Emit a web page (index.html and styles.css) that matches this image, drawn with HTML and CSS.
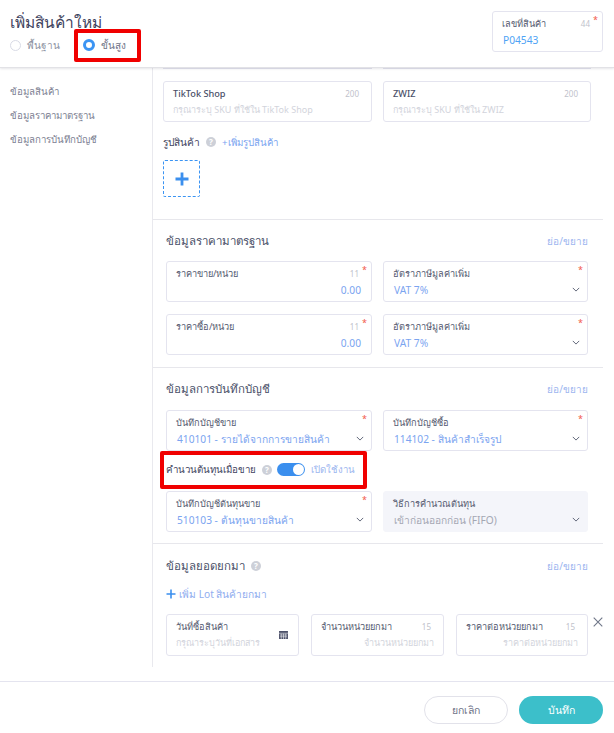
FILE: index.html
```html
<!DOCTYPE html>
<html lang="th">
<head>
<meta charset="utf-8">
<title>เพิ่มสินค้าใหม่</title>
<link rel="stylesheet" href="styles.css">
</head>
<body>
<div class="page">
  <header class="top">
    <div class="top-left">
      <h1 class="title">เพิ่มสินค้าใหม่</h1>
      <div class="radios">
        <label class="radio"><span class="dot"></span>พื้นฐาน</label>
        <label class="radio radio-on"><span class="dot dot-on"></span>ขั้นสูง</label>
      </div>
    </div>
    <div class="field code-field">
      <div class="field-head"><span class="lbl">เลขที่สินค้า</span><span class="count">44</span></div>
      <div class="val">P04543</div>
      <i class="req">*</i>
    </div>
    <div class="redbox redbox-radio"></div>
  </header>
  <div class="body">
    <nav class="side">
      <a>ข้อมูลสินค้า</a>
      <a>ข้อมูลราคามาตรฐาน</a>
      <a>ข้อมูลการบันทึกบัญชี</a>
    </nav>
    <main class="main">
      <section class="sec sec-first">
        <div class="cut-row"><div class="cut"></div><div class="cut"></div></div>
        <div class="two two-wide">
          <div class="field">
            <div class="field-head"><b class="lbl-b">TikTok Shop</b><span class="count">200</span></div>
            <div class="ph">กรุณาระบุ SKU ที่ใช้ใน TikTok Shop</div>
          </div>
          <div class="field">
            <div class="field-head"><b class="lbl-b">ZWIZ</b><span class="count">200</span></div>
            <div class="ph">กรุณาระบุ SKU ที่ใช้ใน ZWIZ</div>
          </div>
        </div>
        <div class="pic-row">
          <span class="pic-lbl">รูปสินค้า</span>
          <span class="help">?</span>
          <a class="link">+เพิ่มรูปสินค้า</a>
        </div>
        <div class="upload">
          <svg width="16" height="16" viewBox="0 0 16 16"><path d="M8 1.500v13M1.500 8h13" stroke="#3b8fee" stroke-width="2.8" fill="none"/></svg>
        </div>
      </section>

      <section class="sec sec-price">
        <div class="sec-head"><h2>ข้อมูลราคามาตรฐาน</h2><a class="link-sm">ย่อ/ขยาย</a></div>
        <div class="two">
          <div class="field">
            <div class="field-head"><span class="lbl">ราคาขาย/หน่วย</span><span class="count">11</span></div>
            <div class="val val-right">0.00</div><i class="req">*</i>
          </div>
          <div class="field">
            <div class="field-head"><span class="lbl">อัตราภาษีมูลค่าเพิ่ม</span></div>
            <div class="val">VAT 7%</div><i class="req">*</i>
            <svg class="chev" viewBox="0 0 10 6"><path d="M1 1l4 4 4-4" stroke="#5b6275" stroke-width="1.2" fill="none"/></svg>
          </div>
          <div class="field">
            <div class="field-head"><span class="lbl">ราคาซื้อ/หน่วย</span><span class="count">11</span></div>
            <div class="val val-right">0.00</div><i class="req">*</i>
          </div>
          <div class="field">
            <div class="field-head"><span class="lbl">อัตราภาษีมูลค่าเพิ่ม</span></div>
            <div class="val">VAT 7%</div><i class="req">*</i>
            <svg class="chev" viewBox="0 0 10 6"><path d="M1 1l4 4 4-4" stroke="#5b6275" stroke-width="1.2" fill="none"/></svg>
          </div>
        </div>
      </section>

      <section class="sec sec-acc">
        <div class="sec-head"><h2>ข้อมูลการบันทึกบัญชี</h2><a class="link-sm">ย่อ/ขยาย</a></div>
        <div class="two">
          <div class="field">
            <div class="field-head"><span class="lbl">บันทึกบัญชีขาย</span></div>
            <div class="val">410101 - รายได้จากการขายสินค้า</div><i class="req">*</i>
            <svg class="chev" viewBox="0 0 10 6"><path d="M1 1l4 4 4-4" stroke="#5b6275" stroke-width="1.2" fill="none"/></svg>
          </div>
          <div class="field">
            <div class="field-head"><span class="lbl">บันทึกบัญชีซื้อ</span></div>
            <div class="val">114102 - สินค้าสำเร็จรูป</div><i class="req">*</i>
            <svg class="chev" viewBox="0 0 10 6"><path d="M1 1l4 4 4-4" stroke="#5b6275" stroke-width="1.2" fill="none"/></svg>
          </div>
        </div>
        <div class="toggle-row">
          <span class="toggle-lbl">คำนวนต้นทุนเมื่อขาย</span>
          <span class="help">?</span>
          <span class="switch"><span class="knob"></span></span>
          <span class="toggle-txt">เปิดใช้งาน</span>
          <div class="redbox redbox-toggle"></div>
        </div>
        <div class="two">
          <div class="field">
            <div class="field-head"><span class="lbl">บันทึกบัญชีต้นทุนขาย</span></div>
            <div class="val">510103 - ต้นทุนขายสินค้า</div><i class="req">*</i>
            <svg class="chev" viewBox="0 0 10 6"><path d="M1 1l4 4 4-4" stroke="#5b6275" stroke-width="1.2" fill="none"/></svg>
          </div>
          <div class="field field-off">
            <div class="field-head"><span class="lbl">วิธีการคำนวณต้นทุน</span></div>
            <div class="val val-off">เข้าก่อนออกก่อน (FIFO)</div>
            <svg class="chev" viewBox="0 0 10 6"><path d="M1 1l4 4 4-4" stroke="#5b6275" stroke-width="1.2" fill="none"/></svg>
          </div>
        </div>
      </section>

      <section class="sec sec-open">
        <div class="sec-head"><h2>ข้อมูลยอดยกมา <span class="help help-h">?</span></h2><a class="link-sm">ย่อ/ขยาย</a></div>
        <a class="add-lot">
          <svg width="10" height="10" viewBox="0 0 10 10"><path d="M5 .5v9M.5 5h9" stroke="#3b8fee" stroke-width="1.6" fill="none"/></svg>
          เพิ่ม Lot สินค้ายกมา
        </a>
        <div class="lot">
          <div class="field">
            <div class="field-head"><span class="lbl">วันที่ซื้อสินค้า</span></div>
            <div class="ph">กรุณาระบุวันที่เอกสาร</div>
            <svg class="cal" width="9" height="8" viewBox="0 0 10 9"><rect width="10" height="9" fill="#4a4f68"/><path d="M0 2.500h10M1 4.500h8M1 6.500h8M2.500 3v6M5 3v6M7.500 3v6" stroke="#fff" stroke-width=".6"/></svg>
          </div>
          <div class="field">
            <div class="field-head"><span class="lbl">จำนวนหน่วยยกมา</span><span class="count">15</span></div>
            <div class="ph ph-right">จำนวนหน่วยยกมา</div>
          </div>
          <div class="field">
            <div class="field-head"><span class="lbl">ราคาต่อหน่วยยกมา</span><span class="count">15</span></div>
            <div class="ph ph-right">ราคาต่อหน่วยยกมา</div>
          </div>
          <svg class="close" width="10" height="10" viewBox="0 0 10 10"><path d="M.7.700l8.600 8.600M9.300.7L.7 9.300" stroke="#6f7688" stroke-width="1.1" fill="none"/></svg>
        </div>
      </section>
    </main>
  </div>
  <footer class="foot">
    <button class="btn btn-cancel">ยกเลิก</button>
    <button class="btn btn-save">บันทึก</button>
  </footer>
</div>
</body>
</html>
```
FILE: styles.css
```css
* { box-sizing: border-box; }
html, body { margin: 0; padding: 0; }
body {
  width: 614px;
  height: 733px;
  overflow: hidden;
  background: #fff;
  color: #4a4f68;
  font-family: "Noto Sans", "Open Sans", sans-serif;
  font-size: 11px;
}
.page { position: relative; width: 614px; height: 733px; display: flex; flex-direction: column; }

/* header */
.top {
  position: relative;
  z-index: 2;
  height: 68px;
  flex: none;
  display: flex;
  justify-content: space-between;
  padding: 11px 11px 0 10px;
  background: #fff;
  border-bottom: 1px solid #e2e2e6;
  box-shadow: 0 1px 2px rgba(60, 60, 80, .12);
}
.title { margin: 0; font-size: 15.5px; line-height: 22px; font-weight: 400; color: #3f4460; }
.radios { display: flex; margin-top: 1px; }
.radio { display: flex; align-items: center; gap: 6px; height: 22px; font-size: 10px; color: #8d91a1; width: 73px; }
.radio-on { color: #6f7488; }
.dot { width: 11px; height: 11px; border-radius: 50%; border: 1px solid #d9dbe6; }
.dot-on { width: 12px; height: 12px; border: 3px solid #3b94f3; }
.redbox { position: absolute; border: 4px solid #f00000; border-radius: 2px; }
.redbox-radio { left: 74px; top: 29px; width: 67px; height: 33px; }
.redbox-toggle { left: -6px; top: 0; width: 207px; height: 38px; }

/* fields */
.field {
  position: relative;
  height: 41px;
  padding: 3px 9px 0 9px;
  border: 1px solid #e4e4ef;
  border-radius: 3px;
  background: #fff;
}
.field-head { display: flex; justify-content: space-between; align-items: center; height: 17px; }
.lbl { font-size: 9.2px; color: #545970; }
.lbl-b { font-size: 9.2px; font-weight: 500; color: #4a4f68; }
.count { font-size: 8px; color: #c0c2cb; padding-right: 3px; }
.val { font-size: 10.2px; line-height: 16px; padding-left: 1px; color: #7ba4f0; }
.val-right { text-align: right; padding-right: 1px; }
.val-off { color: #a4a7b3; }
.ph { font-size: 9px; line-height: 16px; color: #d2d4dc; white-space: nowrap; overflow: hidden; }
.ph-right { text-align: right; }
.req { position: absolute; right: 4px; top: 3px; font-style: normal; font-size: 9px; line-height: 9px; color: #f2584c; }
.chev { position: absolute; right: 7px; top: 25px; width: 8px; height: 5px; }
.cal { position: absolute; right: 10px; top: 16px; }
.field-off { border-color: #f4f5fa; background: #f4f5fa; }
.code-field { width: 111px; }
.code-field .val { color: #4ea3f5; }

/* body */
.body { flex: none; height: 613px; display: flex; overflow: hidden; }
.side {
  flex: none;
  width: 152px;
  padding: 12px 0 0 10px;
  display: flex;
  flex-direction: column;
  font-size: 9.7px;
  color: #7d8193;
}
.side a { height: 24px; line-height: 24px; }
.main { flex: none; width: 451px; height: 599px; border-left: 1px solid #e9e9ee; }
.sec { border-bottom: 1px solid #e7e7ec; padding: 12px 15px 0 13px; }
.sec-first { height: 152px; padding: 0 12px 0 10px; }
.sec-price { height: 148px; }
.sec-acc { height: 176px; }
.sec-open { border-bottom: 0; padding-top: 13px; }
.cut-row { display: grid; grid-template-columns: 209px 208px; gap: 11px; height: 13px; }
.cut { height: 1px; border-bottom: 1px solid #e4e4ef; }
.two { display: grid; grid-template-columns: 206px 205px; gap: 12px 11px; }
.two-wide { grid-template-columns: 209px 208px; }
.pic-row { display: flex; align-items: center; height: 18px; margin-top: 11px; gap: 6px; }
.pic-lbl { font-size: 10.2px; color: #3f4460; }
.link { font-size: 9.7px; color: #7ba4f0; }
.help {
  display: inline-flex;
  align-items: center;
  justify-content: center;
  width: 10px;
  height: 10px;
  border-radius: 50%;
  background: #cdd0d8;
  color: #fff;
  font-size: 8px;
  line-height: 10px;
  font-weight: 700;
}
.upload {
  width: 37px;
  height: 37px;
  margin-top: 9px;
  display: flex;
  align-items: center;
  justify-content: center;
  border: 1px dashed #3b94f3;
  border-radius: 2px;
}
.sec-head { display: flex; justify-content: space-between; align-items: center; height: 18px; margin-bottom: 11px; }
.sec-head h2 { margin: 0; font-size: 11.5px; font-weight: 400; color: #4a4f68; display: flex; align-items: center; gap: 6px; }
.link-sm { font-size: 10px; color: #9db6ef; }
.toggle-row { position: relative; display: flex; align-items: center; height: 40px; padding-bottom: 3px; }
.toggle-lbl { font-size: 9.75px; color: #3f4460; margin-right: 6px; }
.switch { position: relative; width: 28px; height: 13px; margin-left: 5px; margin-right: 6px; border-radius: 7px; background: #3b8fee; }
.knob { position: absolute; right: 1px; top: 1px; width: 11px; height: 11px; border-radius: 50%; background: #fff; }
.toggle-txt { font-size: 9.6px; color: #9db6ef; }
.sec-acc .sec-head { margin-bottom: 12px; }
.add-lot { display: flex; align-items: center; gap: 3px; height: 18px; margin-top: -1px; font-size: 10.2px; color: #8fadef; }
.lot { position: relative; display: grid; grid-template-columns: 133px 133px 132px; gap: 12px; margin-top: 11px; }
.lot .field { height: 42px; }
.close { position: absolute; left: 427px; top: 3px; }

/* footer */
.foot {
  flex: none;
  height: 52px;
  display: flex;
  justify-content: flex-end;
  gap: 11px;
  padding: 14px 11px 0 0;
  border-top: 1px solid #e4e4ef;
}
.btn { width: 84px; height: 28px; border-radius: 14px; font: inherit; font-size: 10.5px; padding: 0; }
.btn-cancel { background: #fff; border: 1px solid #e2e2ea; color: #6f7488; }
.btn-save { background: #3cbfca; border: 0; color: #fff; }
```
